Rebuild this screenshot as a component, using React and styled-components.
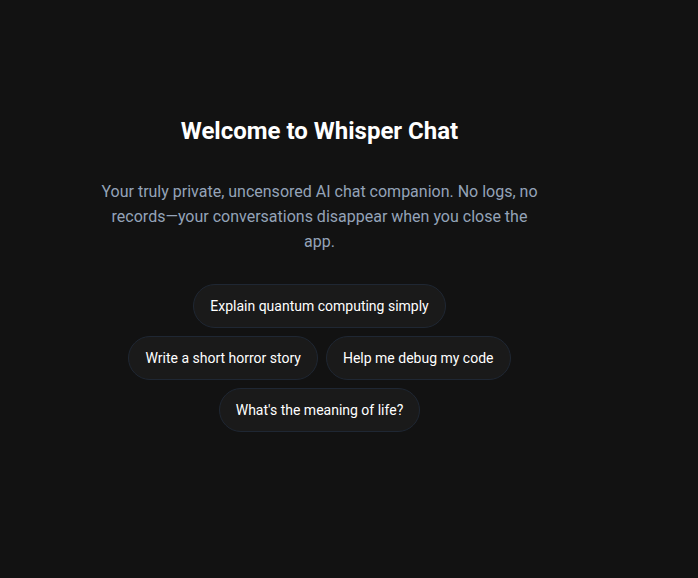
import React from 'react'
import styled, { createGlobalStyle } from 'styled-components'

const GlobalStyle = createGlobalStyle`
  html, body {
    margin: 0;
    padding: 0;
    background: #121212;
  }
  body {
    font-family: Roboto, "Noto Sans", sans-serif;
    -webkit-font-smoothing: antialiased;
  }
`

const Page = styled.div`
  width: 639px;
  height: 578px;
  background: #121212;
  display: flex;
  flex-direction: column;
  align-items: center;
  padding-top: 115px;
  box-sizing: border-box;
`

const Title = styled.h1`
  margin: 0;
  font-size: 24px;
  line-height: 32px;
  font-weight: 700;
  color: #ffffff;
`

const Subtitle = styled.p`
  margin: 32px 0 0;
  max-width: 448px;
  text-align: center;
  font-size: 16px;
  line-height: 25px;
  color: #94a3b8;
`

const Suggestions = styled.div`
  margin-top: 30px;
  max-width: 448px;
  display: flex;
  flex-wrap: wrap;
  justify-content: center;
  gap: 8px;
`

const Chip = styled.button`
  height: 44px;
  padding: 0 16px;
  border-radius: 22px;
  border: 1px solid #1f2733;
  background: #1a1a1a;
  color: #ffffff;
  font-family: inherit;
  font-size: 14px;
  cursor: pointer;
`

const prompts = [
  'Explain quantum computing simply',
  'Write a short horror story',
  'Help me debug my code',
  "What's the meaning of life?",
]

export default function App() {
  return (
    <>
      <GlobalStyle />
      <Page>
        <Title>Welcome to Whisper Chat</Title>
        <Subtitle>
          Your truly private, uncensored AI chat companion. No logs, no records—your
          conversations disappear when you close the app.
        </Subtitle>
        <Suggestions>
          {prompts.map((p) => (
            <Chip key={p}>{p}</Chip>
          ))}
        </Suggestions>
      </Page>
    </>
  )
}
